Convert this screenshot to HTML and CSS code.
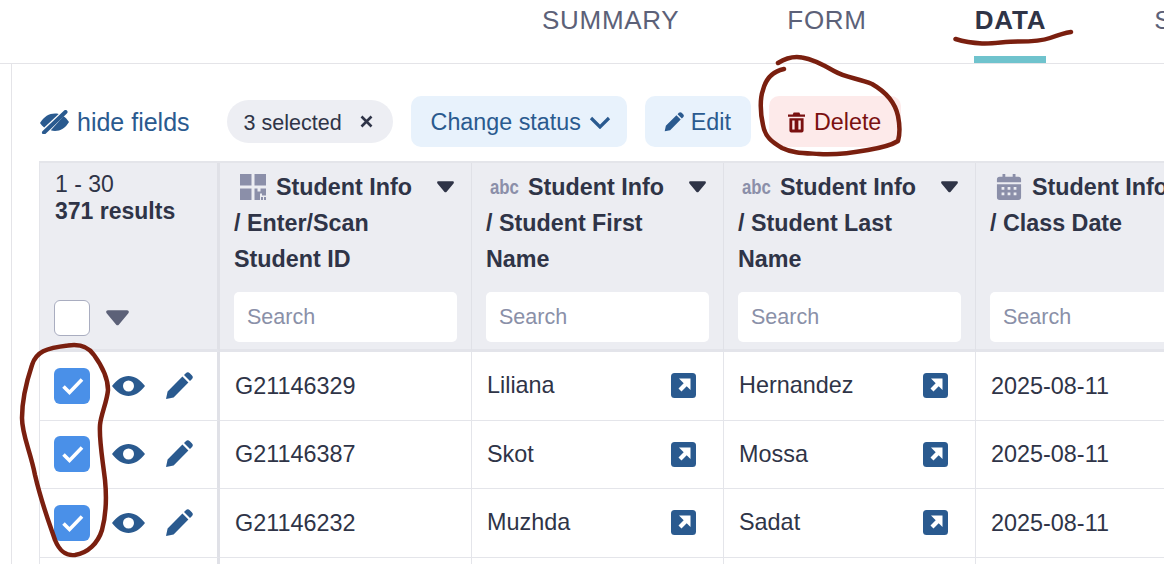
FILE: index.html
```html
<!DOCTYPE html>
<html lang="en">
<head>
  <meta charset="UTF-8" />
  <title>Data</title>
  <link rel="stylesheet" href="styles.css">
</head>
<body>
  <svg width="0" height="0" class="defs">
    <symbol id="pencil" viewBox="0 0 28 28"><path d="M1 27l1.6-7.6L17.4 4.6l6 6L8.600 25.400zM19 3l1.800-1.800a2.800 2.800 0 0 1 4 0l2 2a2.800 2.800 0 0 1 0 4L25 9z"/></symbol>
    <symbol id="eye" viewBox="0 0 33 20"><path fill-rule="evenodd" d="M0 10C5 3.500 10.500 0 16.500 0S28 3.500 33 10c-5 6.500-10.500 10-16.500 10S5 16.500 0 10zm16.500-5.500a5.500 5.500 0 1 0 0 11 5.500 5.500 0 0 0 0-11z"/></symbol>
    <symbol id="arrow" viewBox="0 0 25 25"><rect width="25" height="25" rx="3.500" fill="#2a5a8f"/><path d="M8 5.500h11.500V17l-3.800-3.800-5.200 5.200-3-3 5.200-5.200z" fill="#fff"/></symbol>
    <symbol id="caret" viewBox="0 0 18 12"><path d="M1.500 0h15c1.200 0 1.800 1.300 1 2.200L10 11.200c-.5.600-1.500.600-2 0L.5 2.200C-.3 1.300.3 0 1.500 0z"/></symbol>
    <symbol id="check" viewBox="0 0 36 36"><rect width="36" height="36" rx="6" fill="#4a90e8"/><path d="M9.500 18.500l6 6L28 11.500" fill="none" stroke="#fff" stroke-width="3.600"/></symbol>
  </svg>

  <nav class="tabs">
    <a class="tab">SUMMARY</a>
    <a class="tab">FORM</a>
    <a class="tab active">DATA</a>
    <a class="tab">SETTINGS</a>
  </nav>

  <main class="content">
    <div class="toolbar">
      <a class="hide-fields">
        <svg class="eye-slash" viewBox="0 0 29 24"><path d="M0 13C4 6.500 9 3.500 15 3.500c1.300 0 2.500.1 3.700.5L4.200 17.500C2.600 16.300 1.200 14.800 0 13zM23.500 6.200C25.400 7.400 27.300 9.300 29 12c-3.500 6-8.500 9-14 9-1.500 0-2.900-.2-4.200-.7z"/><path d="M4 22.500L25.500 2" fill="none" stroke="#2a5a8f" stroke-width="4" stroke-linecap="round"/></svg>
        <span class="hide-label">hide fields</span>
      </a>
      <span class="chip">
        <span class="chip-label">3 selected</span>
        <svg class="chip-x" viewBox="0 0 13 13"><path d="M1.500 1.500l10 10M11.500 1.500l-10 10" fill="none" stroke="#2f3447" stroke-width="2.600"/></svg>
      </span>
      <button class="btn btn-status" type="button">Change status
        <svg class="chevron" viewBox="0 0 22 13"><path d="M2 2l9 9 9-9" fill="none" stroke="#2a5a8f" stroke-width="3.200"/></svg>
      </button>
      <button class="btn btn-edit" type="button"><svg class="icon-edit"><use href="#pencil"/></svg>Edit</button>
      <button class="btn btn-delete" type="button">
        <svg class="icon-trash" viewBox="0 0 18 21"><path d="M6 0h6l1 2h5v2.500H0V2h5zM1.500 6h15v13a2 2 0 0 1-2 2h-11a2 2 0 0 1-2-2zm3 2.500v9.500H7V8.500zm6.500 0v9.500h2.500V8.500z" fill-rule="evenodd"/></svg>
        Delete
      </button>
    </div>

    <div class="grid">
      <div class="head head-first">
        <div class="count">1 - 30<br><b>371 results</b></div>
        <div class="select-all"><span class="box"></span><svg class="caret caret-all"><use href="#caret"/></svg></div>
      </div>

      <div class="head">
        <div class="title">
          <span class="type">
            <svg class="type-icon" viewBox="0 0 26 26"><path d="M0 0h11.500v11.500H0zM14.500 0H26v11.500H14.500zM0 14.500h11.500V26H0zM14.500 14.500h3v3h3v-3H26v7h-4v-2h-2v6.500h-5.500zM21 23h2v3h-2zM24 23h2v3h-2z"/></svg>
          </span>
          <span class="title-text">Student Info</span>
          <svg class="caret"><use href="#caret"/></svg>
        </div>
        <div class="title-rest">/ Enter/Scan<br>Student ID</div>
        <input class="search" type="text" placeholder="Search">
      </div>

      <div class="head">
        <div class="title">
          <span class="type type-abc">abc</span>
          <span class="title-text">Student Info</span>
          <svg class="caret"><use href="#caret"/></svg>
        </div>
        <div class="title-rest">/ Student First<br>Name</div>
        <input class="search" type="text" placeholder="Search">
      </div>

      <div class="head">
        <div class="title">
          <span class="type type-abc">abc</span>
          <span class="title-text">Student Info</span>
          <svg class="caret"><use href="#caret"/></svg>
        </div>
        <div class="title-rest">/ Student Last<br>Name</div>
        <input class="search" type="text" placeholder="Search">
      </div>

      <div class="head">
        <div class="title">
          <span class="type">
            <svg class="type-icon" viewBox="0 0 26 28"><path fill-rule="evenodd" d="M6 0h3v3h8V0h3v3h3a3 3 0 0 1 3 3v3H0V6a3 3 0 0 1 3-3h3zM0 11h26v14a3 3 0 0 1-3 3H3a3 3 0 0 1-3-3zm5 3v3h3v-3zm6.500 0v3h3v-3zm6.500 0v3h3v-3zM5 20v3h3v-3zm6.500 0v3h3v-3zm6.500 0v3h3v-3z"/></svg>
          </span>
          <span class="title-text">Student Info</span>
          <svg class="caret"><use href="#caret"/></svg>
        </div>
        <div class="title-rest">/ Class Date</div>
        <input class="search" type="text" placeholder="Search">
      </div>

      <div class="cell cell-first">
        <svg class="box-checked"><use href="#check"/></svg>
        <svg class="icon-eye"><use href="#eye"/></svg>
        <svg class="icon-pencil"><use href="#pencil"/></svg>
      </div>
      <div class="cell">G21146329</div>
      <div class="cell cell-name">Liliana<svg class="link"><use href="#arrow"/></svg></div>
      <div class="cell cell-name">Hernandez<svg class="link"><use href="#arrow"/></svg></div>
      <div class="cell">2025-08-11</div>

      <div class="cell cell-first">
        <svg class="box-checked"><use href="#check"/></svg>
        <svg class="icon-eye"><use href="#eye"/></svg>
        <svg class="icon-pencil"><use href="#pencil"/></svg>
      </div>
      <div class="cell">G21146387</div>
      <div class="cell cell-name">Skot<svg class="link"><use href="#arrow"/></svg></div>
      <div class="cell cell-name">Mossa<svg class="link"><use href="#arrow"/></svg></div>
      <div class="cell">2025-08-11</div>

      <div class="cell cell-first">
        <svg class="box-checked"><use href="#check"/></svg>
        <svg class="icon-eye"><use href="#eye"/></svg>
        <svg class="icon-pencil"><use href="#pencil"/></svg>
      </div>
      <div class="cell">G21146232</div>
      <div class="cell cell-name">Muzhda<svg class="link"><use href="#arrow"/></svg></div>
      <div class="cell cell-name">Sadat<svg class="link"><use href="#arrow"/></svg></div>
      <div class="cell">2025-08-11</div>

      <div class="cell cell-first"></div>
      <div class="cell"></div>
      <div class="cell"></div>
      <div class="cell"></div>
      <div class="cell"></div>
    </div>
  </main>

  <!-- red pen marks on top of the screenshot -->
  <svg class="marks" viewBox="0 0 1164 564">
    <path d="M955.500 39C965 42 972 43 982 43.500C995 44 1004 41.500 1018 41.500C1032 41.500 1042 41 1050 38C1058 35 1064 33 1071 32"/>
    <path d="M778 63C786 58 794 56 802 57.500C812 59 822 64 834 71C846 78 858 78 872 84C886 92 895 102 898 116C900 126 900 134 898 141C890 146 880 148 868 150C852 153 835 155 819 154C804 153 792 153 782 148C772 142 765 137 763 125C760 112 760 98 763 90C765 82 770 72 784 69"/>
    <path d="M68 345.500C78 344 88 346 94 355C102 366 108 378 108 390C107 402 101 414 100 425C99 440 102 455 105 480C107 500 106 515 102 530C98 543 88 553 75 555C66 556 60 552 55 540C50 525 42 505 35 475C30 450 22 435 22 418C22 400 27 380 32 365C36 352 46 348 68 345.500"/>
  </svg>
</body>
</html>
```

FILE: styles.css
```css
html,
body {
  height: 100%;
}

body {
  margin: 0;
  font-family: "Liberation Sans", Arial, sans-serif;
  color: #2f3447;
  background-color: #fff;
  overflow: hidden;
  position: relative;
}

.defs {
  display: block;
}

.tabs {
  display: flex;
  gap: 108px;
  height: 63px;
  padding-left: 542px;
  border-bottom: 1px solid #e4e4e8;
  overflow: hidden;
}

.tab {
  flex: none;
  font-size: 26px;
  line-height: 41px;
  letter-spacing: 0.7px;
  color: #5c6178;
  position: relative;
  height: 63px;
}

.tab.active {
  font-weight: bold;
  color: #2f3447;
  letter-spacing: 0.8px;
}

.tab.active::after {
  content: "";
  position: absolute;
  left: -1px;
  right: 0;
  bottom: 0;
  height: 7px;
  background-color: #6fc3cd;
}

.content {
  margin-left: 11px;
  padding-left: 27px;
  border-left: 1px solid #e4e4e8;
  height: 500px;
  overflow: hidden;
}

.toolbar {
  display: flex;
  align-items: center;
  height: 51px;
  margin-top: 32px;
  margin-bottom: 14px;
}

.hide-fields {
  display: flex;
  align-items: center;
  font-size: 25px;
  color: #2a5a8f;
  margin-left: 1px;
  margin-right: 37px;
}

.hide-label {
  padding-top: 1px;
  margin-left: 1px;
}

.eye-slash {
  width: 29px;
  height: 24px;
  margin-right: 7px;
  fill: #2a5a8f;
}

.chip {
  display: flex;
  align-items: center;
  justify-content: space-between;
  width: 166px;
  height: 43px;
  padding: 0 19px 0 17px;
  box-sizing: border-box;
  border-radius: 22px;
  background-color: #edeef3;
  font-size: 21.5px;
  margin-right: 18px;
  white-space: nowrap;
}

.chip-label {
  padding-top: 3px;
}

.chip-x {
  width: 13px;
  height: 13px;
  margin-right: 1px;
}

.btn {
  display: flex;
  align-items: center;
  height: 51px;
  padding: 1px 20px 0;
  border: none;
  border-radius: 10px;
  background-color: #e8f2fc;
  color: #2a5a8f;
  font-family: inherit;
  font-size: 23.3px;
  margin-right: 18px;
  white-space: nowrap;
}

.btn-status {
  padding-right: 16px;
}

.btn-edit {
  padding-left: 19px;
}

.chevron {
  width: 22px;
  height: 13px;
  margin-left: 8px;
}

.icon-edit {
  width: 20px;
  height: 22px;
  fill: #2a5a8f;
  margin-right: 7px;
}

.btn-delete {
  background-color: #fdeaea;
  color: #7a1010;
  margin-right: 0;
  padding: 1px 20px 0 19px;
}

.icon-trash {
  width: 17px;
  height: 21px;
  fill: #7a1010;
  margin-right: 9px;
}

.grid {
  display: grid;
  grid-template-columns: 180px 252px 252px 252px 252px;
  width: 1188px;
  border-top: 2px solid #e4e5ea;
  border-left: 1px solid #e4e5ea;
  font-size: 23.4px;
}

.head {
  display: flex;
  flex-direction: column;
  height: 189px;
  padding: 6px 14px 7px 14px;
  box-sizing: border-box;
  background-color: #ecedf2;
  border-right: 1px solid #e0e1e7;
  border-bottom: 3px solid #e3e4ea;
  font-weight: bold;
  font-size: 23.3px;
  line-height: 36px;
}

.head-first {
  padding: 8px 0 0 15px;
  border-right: 3px solid #e0e1e7;
  font-weight: normal;
  line-height: 27px;
}

.count {
  font-size: 23px;
}

.select-all {
  display: flex;
  align-items: center;
  margin-top: auto;
  margin-bottom: 13px;
  margin-left: -1px;
}

.box {
  width: 34px;
  height: 34px;
  border: 1px solid #a9adc0;
  border-radius: 6px;
  background-color: #fff;
}

.caret {
  width: 17px;
  height: 12px;
  fill: #2f3447;
  margin-left: auto;
  margin-right: 3px;
  flex: none;
}

.caret-all {
  width: 23px;
  height: 16px;
  fill: #5c6178;
  margin-left: 16px;
}

.title {
  display: flex;
  align-items: center;
}

.type {
  width: 42px;
  flex: none;
  padding-left: 6px;
  box-sizing: border-box;
  display: flex;
}

.type-icon {
  width: 26px;
  height: 26px;
  fill: #8b8fa9;
}

.type-abc {
  padding-left: 5px;
  font-size: 21px;
  color: #8b8fa9;
  transform: scaleX(0.8);
  transform-origin: left center;
}

.title-text {
  white-space: nowrap;
}

.search {
  margin-top: auto;
  height: 50px;
  width: 223px;
  box-sizing: border-box;
  border: none;
  border-radius: 5px;
  padding: 0 13px;
  background-color: #fff;
  font-family: inherit;
  font-size: 21.5px;
  color: #2f3447;
}

.search::placeholder {
  color: #8a90a8;
  opacity: 1;
}

.cell {
  display: flex;
  align-items: center;
  justify-content: space-between;
  height: 68.5px;
  padding: 1px 27px 0 15px;
  box-sizing: border-box;
  border-right: 1px solid #e4e5ea;
  border-bottom: 1px solid #e4e5ea;
}

.cell-name {
  padding-top: 0;
}

.cell-first {
  justify-content: flex-start;
  padding: 0 0 0 14px;
  border-right: 3px solid #e0e1e7;
}

.box-checked {
  width: 36px;
  height: 36px;
}

.icon-eye {
  width: 33px;
  height: 20px;
  fill: #2a5a8f;
  margin-left: 22px;
}

.icon-pencil {
  width: 28px;
  height: 28px;
  fill: #2a5a8f;
  margin-left: 20px;
}

.link {
  width: 25px;
  height: 25px;
}

.marks {
  position: absolute;
  left: 0;
  top: 0;
  width: 1164px;
  height: 564px;
  fill: none;
  stroke: #7a1f0f;
  stroke-width: 4.5;
  stroke-linecap: round;
  stroke-linejoin: round;
  pointer-events: none;
}
```
